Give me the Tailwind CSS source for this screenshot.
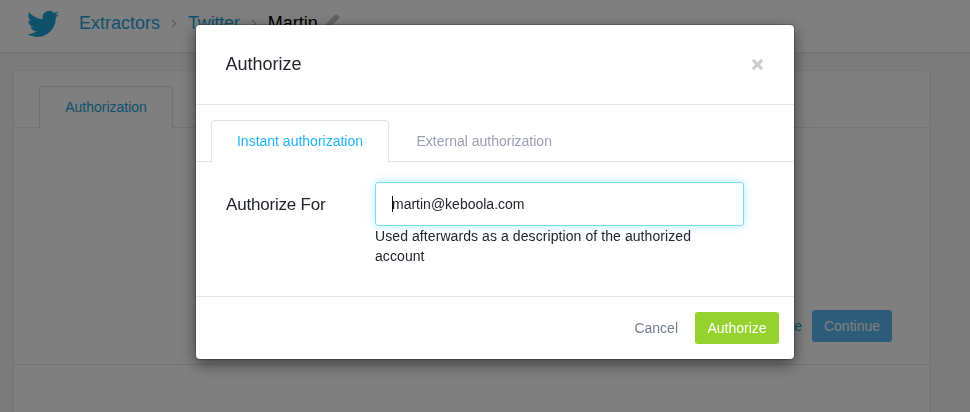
<!DOCTYPE html>
<html lang="en">
<head>
<meta charset="utf-8">
<title>Authorize</title>
<script src="https://cdn.jsdelivr.net/npm/@tailwindcss/browser@4"></script>
</head>
<body class="h-[412px] overflow-hidden bg-[#f6f6f6] font-['Liberation_Sans',Arial,sans-serif] text-sm text-[#22252e]">
<header class="flex h-[54px] items-center border-b-2 border-[#ebebeb] bg-white pb-[6px] pl-[27px] text-lg text-[#1f9fdc]">
  <svg class="mt-[2px] h-[32px] w-[32px] shrink-0" viewBox="0 0 24 24" fill="#1fa2d6"><path d="M23.953 4.57a10 10 0 01-2.825.775 4.958 4.958 0 002.163-2.723c-.951.555-2.005.959-3.127 1.184a4.92 4.92 0 00-8.384 4.482C7.69 8.095 4.067 6.13 1.64 3.162a4.822 4.822 0 00-.666 2.475c0 1.71.87 3.213 2.188 4.096a4.904 4.904 0 01-2.228-.616v.06a4.923 4.923 0 003.946 4.827 4.996 4.996 0 01-2.212.085 4.936 4.936 0 004.604 3.417 9.867 9.867 0 01-6.102 2.105c-.39 0-.779-.023-1.17-.067a13.995 13.995 0 007.557 2.209c9.053 0 13.998-7.496 13.998-13.985 0-.21 0-.42-.015-.63A9.935 9.935 0 0024 4.59z"/></svg>
  <nav class="flex items-center pl-5">
    <a>Extractors</a>
    <svg class="ml-[11px] mr-[11px] h-[9px] w-[6px]" viewBox="0 0 6 9" fill="none" stroke="#c2c2c2" stroke-width="1.4"><path d="M1 .8l3.7 3.7L1 8.2"/></svg>
    <a class="tracking-[-0.2px]">Twitter</a>
    <svg class="ml-[11px] mr-[11px] h-[9px] w-[6px]" viewBox="0 0 6 9" fill="none" stroke="#c2c2c2" stroke-width="1.4"><path d="M1 .8l3.7 3.7L1 8.2"/></svg>
    <span class="text-black">Martin</span>
    <svg class="ml-[7px] mt-[-3px] h-[15px] w-[15px]" viewBox="0 0 15 15" fill="#c4c4c4"><path d="M0 14.500l1-4.500L9.800 1q1.400-1.400 2.800 0l1 1q1.400 1.400 0 2.800L4.600 13.500z"/></svg>
  </nav>
</header>
<main class="ml-3 mt-[16px] h-[360px] w-[919px] rounded border-2 border-t border-[#eeeeee] bg-white">
  <div class="flex h-[57px] items-end border-b border-[#e8e8e8] pl-[25px]">
    <div class="-mb-px flex h-[42px] w-[134px] items-center justify-center rounded-t border border-b-0 border-[#e0e0e0] bg-white pb-[2px] text-[#1f9fdc]">Authorization</div>
  </div>
  <div class="flex h-[237px] items-end justify-end gap-[10px] border-b border-[#e8e8e8] pb-[22px] pr-[37px]">
    <span class="flex h-8 items-center pb-px text-[#1f9fdc]">e</span>
    <div class="flex h-8 w-20 items-center justify-center rounded-[3px] bg-[#5bb8f3] text-white">Continue</div>
  </div>
</main>
<div class="fixed inset-0 flex items-start bg-black/50 pl-[196px] pt-[25px]">
  <section class="w-[598px] rounded-[4px] bg-white shadow-[0_0_0_1px_rgba(0,0,0,0.2),0_5px_15px_rgba(0,0,0,0.5)]">
    <div class="flex h-20 items-center justify-between border-b border-[#e4e4ea] pl-[29.5px] pr-[31px]">
      <h1 class="pb-[2px] text-lg">Authorize</h1>
      <svg class="h-[11px] w-[11px]" viewBox="0 0 11 11" stroke="#cccccc" stroke-width="3.200" stroke-linecap="round"><path d="M1.800 1.800l7.400 7.400M9.200 1.800L1.800 9.200"/></svg>
    </div>
    <div class="flex h-[57px] items-end border-b border-[#e4e4ea] pl-[15px]">
      <div class="-mb-px flex h-[42px] w-[178px] items-center justify-center rounded-t border border-b-0 border-[#e0e0e8] bg-white pb-[2px] text-[#1eb5fc]">Instant authorization</div>
      <div class="flex h-[42px] items-center pl-[27.5px] pt-[2px] text-[#9a9db3]">External authorization</div>
    </div>
    <div class="flex h-[135px] items-start border-b border-[#e4e4ea] pl-[30px] pt-[20px]">
      <label class="flex h-11 w-[149px] items-center pt-[2px] text-[17px] tracking-[-0.2px]">Authorize For</label>
      <div class="w-[369px]">
        <div class="flex h-11 items-center rounded-[3px] border border-[#78daff] pl-[16px] shadow-[0_0_8px_rgba(102,215,255,0.5)]"><span class="h-4 w-px bg-black"></span><span class="-ml-px">martin@keboola.com</span></div>
        <p class="w-[340px] leading-5 tracking-[0.08px]">Used afterwards as a description of the authorized account</p>
      </div>
    </div>
    <div class="flex h-[62px] items-center justify-end gap-[17px] pr-[15px]">
      <span class="text-[#737c99]">Cancel</span>
      <div class="flex h-8 w-[84px] items-center justify-center rounded-[3px] bg-[#96d22d] text-white">Authorize</div>
    </div>
  </section>
</div>
</body>
</html>
